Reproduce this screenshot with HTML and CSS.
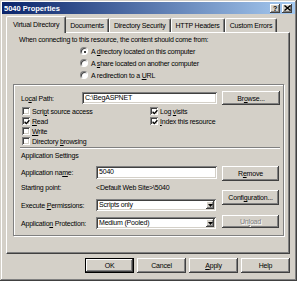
FILE: index.html
```html
<!DOCTYPE html>
<html lang="en">
<head>
    <meta charset="UTF-8">
    <title>5040 Properties</title>
    <link rel="stylesheet" href="styles.css">
</head>
<body>
    <div class="window">
        <div class="titlebar">
            <span class="title">5040 Properties</span>
            <div class="caption-btns">
                <span class="cap-btn">?</span>
                <span class="cap-btn">
                    <svg width="7" height="6" viewBox="0 0 7 6"><path d="M0.5 0.5 L6.5 5.5 M6.5 0.5 L0.5 5.5" stroke="#000" stroke-width="1.4"/></svg>
                </span>
            </div>
        </div>

        <div class="tabs">
            <div class="tab active">Virtual Directory</div>
            <div class="tab">Documents</div>
            <div class="tab">Directory Security</div>
            <div class="tab">HTTP Headers</div>
            <div class="tab">Custom Errors</div>
        </div>

        <div class="panel">
            <div class="intro">When connecting to this resource, the content should come from:</div>
            <div class="radios">
                <div class="radio-row"><span class="radio checked"></span><span>A <u>d</u>irectory located on this computer</span></div>
                <div class="radio-row"><span class="radio"></span><span>A <u>s</u>hare located on another computer</span></div>
                <div class="radio-row"><span class="radio"></span><span>A redirection to a <u>U</u>RL</span></div>
            </div>

            <div class="group">
                <div class="path-row">
                    <span class="path-label">Lo<u>c</u>al Path:</span>
                    <div class="field path-field">C:\BegASPNET</div>
                    <div class="btn browse"><span>Br<u>o</u>wse...</span></div>
                </div>

                <div class="checks">
                    <div class="check-row"><span class="check"></span><span>Scri<u>p</u>t source access</span></div>
                    <div class="check-row"><span class="check checked"><svg width="6" height="6" viewBox="0 0 6 6"><path d="M0.6 2.8 L2.3 4.6 L5.4 1.2" stroke="#000" stroke-width="1.3" fill="none"/></svg></span><span>Log <u>v</u>isits</span></div>
                    <div class="check-row"><span class="check checked"><svg width="6" height="6" viewBox="0 0 6 6"><path d="M0.6 2.8 L2.3 4.6 L5.4 1.2" stroke="#000" stroke-width="1.3" fill="none"/></svg></span><span><u>R</u>ead</span></div>
                    <div class="check-row"><span class="check checked"><svg width="6" height="6" viewBox="0 0 6 6"><path d="M0.6 2.8 L2.3 4.6 L5.4 1.2" stroke="#000" stroke-width="1.3" fill="none"/></svg></span><span><u>I</u>ndex this resource</span></div>
                    <div class="check-row"><span class="check"></span><span><u>W</u>rite</span></div>
                    <div class="check-row"></div>
                    <div class="check-row"><span class="check"></span><span>Directory <u>b</u>rowsing</span></div>
                </div>

                <div class="sep"></div>
                <div class="section-title">Application Settings</div>

                <div class="app">
                    <div class="app-fields">
                        <div class="app-row first">
                            <span class="app-label">Application na<u>m</u>e:</span>
                            <div class="field app-field">5040</div>
                        </div>
                        <div class="app-row start">
                            <span class="app-label">Starting point:</span>
                            <span class="app-value">&lt;Default Web Site&gt;\5040</span>
                        </div>
                        <div class="app-row">
                            <span class="app-label">Execute <u>P</u>ermissions:</span>
                            <div class="field select">
                                <span class="select-text">Scripts only</span>
                                <span class="arrow"><svg width="5" height="3" viewBox="0 0 5 3"><path d="M0 0 H5 L2.5 3 Z" fill="#000"/></svg></span>
                            </div>
                        </div>
                        <div class="app-row">
                            <span class="app-label">Applicatio<u>n</u> Protection:</span>
                            <div class="field select">
                                <span class="select-text">Medium (Pooled)</span>
                                <span class="arrow"><svg width="5" height="3" viewBox="0 0 5 3"><path d="M0 0 H5 L2.5 3 Z" fill="#000"/></svg></span>
                            </div>
                        </div>
                    </div>
                    <div class="app-btns">
                        <div class="btn remove"><span>R<u>e</u>move</span></div>
                        <div class="btn config"><span>Confi<u>g</u>uration...</span></div>
                        <div class="btn unload disabled"><span>Un<u>l</u>oad</span></div>
                    </div>
                </div>
            </div>
        </div>

        <div class="footer">
            <div class="btn dlg default">OK</div>
            <div class="btn dlg">Cancel</div>
            <div class="btn dlg"><span><u>A</u>pply</span></div>
            <div class="btn dlg">Help</div>
        </div>
    </div>
</body>
</html>
```

FILE: styles.css
```css
body {
    margin: 0;
    font-family: "Liberation Sans", Arial, sans-serif;
    font-size: 7px;
    letter-spacing: -0.2px;
    color: #000;
    background: #d4d0c8;
}
u {
    text-decoration-thickness: 1px;
    text-underline-offset: 1px;
}
.window {
    width: 297px;
    height: 281px;
    box-sizing: border-box;
    padding: 2px;
    background: #d4d0c8;
    box-shadow: inset -1px -1px #404040, inset 1px 1px #d4d0c8, inset -2px -2px #808080, inset 2px 2px #fff;
}

/* title bar */
.titlebar {
    height: 12px;
    display: flex;
    align-items: center;
    justify-content: space-between;
    padding: 0 3px 0 2px;
    background: linear-gradient(to right, #0a246a, #a6caf0);
}
.title {
    color: #fff;
    font-weight: bold;
    font-size: 7.5px;
    letter-spacing: 0;
}
.caption-btns {
    display: flex;
    gap: 2px;
}
.cap-btn {
    width: 10px;
    height: 9px;
    display: flex;
    align-items: center;
    justify-content: center;
    background: #d4d0c8;
    font-weight: bold;
    font-size: 7px;
    line-height: 9px;
    box-shadow: inset -1px -1px #404040, inset 1px 1px #fff, inset -2px -2px #808080;
}

/* tabs */
.tabs {
    height: 16px;
    margin-top: 2px;
    padding-left: 6px;
    display: flex;
    align-items: flex-end;
}
.tab {
    height: 14px;
    box-sizing: border-box;
    padding: 0 4px;
    line-height: 13px;
    border-top: 1px solid #fff;
    border-left: 1px solid #fff;
    border-right: 1px solid #404040;
    border-radius: 2px 2px 0 0;
    box-shadow: inset -1px 0 #808080;
    white-space: nowrap;
}
.tab.active {
    height: 17px;
    padding: 0 6px;
    margin: 0 -1px -1px -2px;
    line-height: 15px;
    background: #d4d0c8;
    position: relative;
    z-index: 1;
}

/* page */
.panel {
    height: 222px;
    box-sizing: border-box;
    margin: 0 5px 0 4px;
    border: 1px solid;
    border-color: #fff #404040 #404040 #fff;
    box-shadow: inset -1px -1px #808080;
    padding-top: 2px;
}
.intro {
    line-height: 10px;
    padding-left: 12px;
}
.radios {
    padding-left: 73px;
}
.radio-row {
    height: 12px;
    display: flex;
    align-items: center;
}
.radio {
    width: 8px;
    height: 8px;
    box-sizing: border-box;
    margin-right: 3px;
    border-radius: 50%;
    border: 1px solid;
    border-color: #808080 #fff #fff #808080;
    background: #fff;
    box-shadow: inset 1px 1px #404040;
    display: flex;
    align-items: center;
    justify-content: center;
}
.radio.checked::after {
    content: "";
    width: 2px;
    height: 2px;
    border-radius: 50%;
    background: #000;
    margin: 1px 0 0 1px;
}

.group {
    height: 152px;
    box-sizing: border-box;
    margin: 3px 5px 0 6px;
    border: 1px solid #808080;
    box-shadow: inset 1px 1px #fff, 1px 1px #fff;
}
.path-row {
    height: 14px;
    margin-top: 6px;
    display: flex;
    align-items: center;
}
.path-label {
    width: 61px;
    padding-left: 7px;
}

.field {
    height: 12px;
    box-sizing: border-box;
    background: #fff;
    padding-left: 3px;
    line-height: 12px;
    box-shadow: inset 1px 1px #808080, inset -1px -1px #fff, inset 2px 2px #404040, inset -2px -2px #d4d0c8;
    white-space: nowrap;
}
.path-field {
    width: 135px;
}

.btn {
    box-sizing: border-box;
    display: flex;
    align-items: center;
    justify-content: center;
    background: #d4d0c8;
    white-space: nowrap;
    box-shadow: inset -1px -1px #404040, inset 1px 1px #fff, inset -2px -2px #808080;
}
.browse {
    width: 58px;
    height: 14px;
    margin-left: 5px;
}

.checks {
    margin-top: 1px;
    padding-left: 8px;
    display: grid;
    grid-template-columns: 128px 1fr;
    grid-auto-rows: 10px;
}
.check-row {
    display: flex;
    align-items: center;
}
.check {
    width: 8px;
    height: 8px;
    box-sizing: border-box;
    margin-right: 2px;
    background: #fff;
    box-shadow: inset 1px 1px #808080, inset -1px -1px #fff, inset 2px 2px #404040, inset -2px -2px #d4d0c8;
    display: flex;
    align-items: center;
    justify-content: center;
}
.check svg {
    margin: 1px 0 0 1px;
}

.sep {
    margin: 1px 3px 0 6px;
    border-top: 1px solid #808080;
    border-bottom: 1px solid #fff;
}
.section-title {
    margin-top: 2px;
    padding-left: 7px;
    line-height: 10px;
}

.app {
    margin-top: 5px;
    display: flex;
    align-items: flex-start;
}
.app-fields {
    padding-left: 7px;
}
.app-row {
    height: 12px;
    margin-top: 6px;
    display: flex;
    align-items: center;
}
.app-row.first {
    height: 13px;
    margin-top: 0;
}
.app-row.start {
    margin-top: 2px;
}
.app-label {
    width: 75px;
    white-space: nowrap;
}
.app-field {
    width: 121px;
    height: 13px;
}
.select {
    width: 120px;
    display: flex;
    align-items: center;
    justify-content: space-between;
}
.arrow {
    width: 8px;
    height: 8px;
    margin-right: 2px;
    display: flex;
    align-items: center;
    justify-content: center;
    background: #d4d0c8;
    box-shadow: inset -1px -1px #404040, inset 1px 1px #fff, inset -2px -2px #808080;
}

.app-btns {
    margin-left: 5px;
    display: flex;
    flex-direction: column;
}
.app-btns .btn {
    width: 57px;
    height: 15px;
}
.app-btns .config {
    margin-top: 9px;
}
.app-btns .unload {
    height: 13px;
    margin-top: 10px;
}
.btn.disabled {
    color: #808080;
    text-shadow: 1px 1px #fff;
}

.footer {
    margin: 4px 5px 0 0;
    display: flex;
    justify-content: flex-end;
    gap: 3px;
}
.btn.dlg {
    width: 49px;
    height: 15px;
}
.btn.default {
    box-shadow: inset 0 0 0 1px #000, inset -2px -2px #404040, inset 2px 2px #fff, inset -3px -3px #808080;
}
```
